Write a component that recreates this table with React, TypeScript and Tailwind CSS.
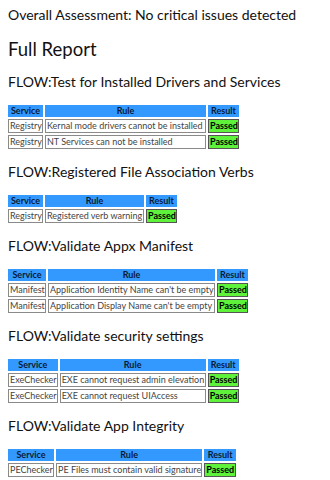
import React from "react";

type Row = { service: string; rule: string };
type Section = { title: string; widths: [string, string, string]; rows: Row[] };

const sections: Section[] = [
  {
    title: "FLOW:Test for Installed Drivers and Services",
    widths: ["w-[35px]", "w-[161px]", "w-[31px]"],
    rows: [
      { service: "Registry", rule: "Kernal mode drivers cannot be installed" },
      { service: "Registry", rule: "NT Services can not be installed" },
    ],
  },
  {
    title: "FLOW:Registered File Association Verbs",
    widths: ["w-[35px]", "w-[99px]", "w-[31px]"],
    rows: [{ service: "Registry", rule: "Registered verb warning" }],
  },
  {
    title: "FLOW:Validate Appx Manifest",
    widths: ["w-[38px]", "w-[167px]", "w-[31px]"],
    rows: [
      { service: "Manifest", rule: "Application Identity Name can't be empty" },
      { service: "Manifest", rule: "Application Display Name can't be empty" },
    ],
  },
  {
    title: "FLOW:Validate security settings",
    widths: ["w-[49px]", "w-[146px]", "w-[31px]"],
    rows: [
      { service: "ExeChecker", rule: "EXE cannot request admin elevation" },
      { service: "ExeChecker", rule: "EXE cannot request UIAccess" },
    ],
  },
  {
    title: "FLOW:Validate App Integrity",
    widths: ["w-[46px]", "w-[146px]", "w-[32px]"],
    rows: [{ service: "PEChecker", rule: "PE Files must contain valid signature" }],
  },
];

function ReportTable({ section }: { section: Section }) {
  const [w1, w2, w3] = section.widths;
  return (
    <table className="-ml-[2px] table-fixed border-separate border-spacing-[2px] text-[9px]">
      <thead>
        <tr className="h-[12px] leading-[12px]">
          <th className={`${w1} bg-[#3399ff] p-0 font-bold text-[#0a1a33]`}>Service</th>
          <th className={`${w2} bg-[#3399ff] p-0 font-bold text-[#0a1a33]`}>Rule</th>
          <th className={`${w3} bg-[#3399ff] p-0 font-bold text-[#0a1a33]`}>Result</th>
        </tr>
      </thead>
      <tbody>
        {section.rows.map((r, i) => (
          <tr key={i} className="h-[14px] leading-[12px]">
            <td className="overflow-hidden border border-[#8a8a8a] p-0 pl-[1px] text-left whitespace-nowrap text-[#444]">
              {r.service}
            </td>
            <td className="overflow-hidden border border-[#8a8a8a] p-0 pl-[1px] text-left whitespace-nowrap text-[#444]">
              {r.rule}
            </td>
            <td className="overflow-hidden border border-[#555] bg-[#5ef23a] p-0 pl-[1px] text-left font-bold whitespace-nowrap text-black">
              Passed
            </td>
          </tr>
        ))}
      </tbody>
    </table>
  );
}

export default function App() {
  return (
    <div
      className="min-h-[480px] bg-white px-2 pt-[7px] text-[#111]"
      style={{ fontFamily: "Lato, 'Open Sans', sans-serif" }}
    >
      <p className="text-[14px] leading-[16px]">Overall Assessment: No critical issues detected</p>
      <h1 className="mt-[14px] text-[18.5px] leading-[24px]">Full Report</h1>
      {sections.map((s) => (
        <div key={s.title}>
          <h3 className="mt-[12px] mb-[12px] text-[14px] leading-[18px]">{s.title}</h3>
          <ReportTable section={s} />
        </div>
      ))}
    </div>
  );
}
